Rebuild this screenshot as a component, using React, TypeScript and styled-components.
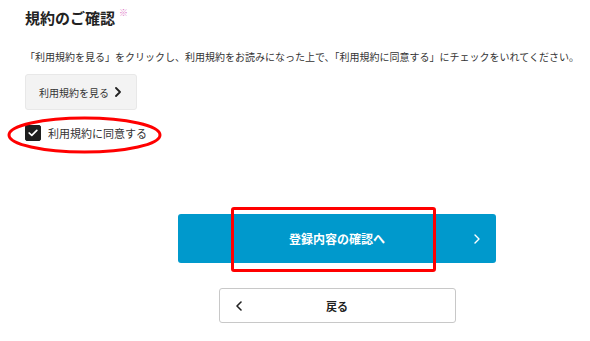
import React, { useState } from 'react'
import styled, { createGlobalStyle } from 'styled-components'

const GlobalStyle = createGlobalStyle`
  html, body {
    margin: 0;
    padding: 0;
    background: #fff;
  }
  body {
    font-family: "Noto Sans CJK JP", "Noto Sans", sans-serif;
    color: #222;
  }
`;

const Page = styled.div`
  width: 590px;
  height: 341px;
  padding: 7px 0 0 25px;
  box-sizing: border-box;
  position: relative;
  overflow: hidden;
`;

const Title = styled.h2`
  margin: 0;
  font-size: 15px;
  font-weight: 700;
  line-height: 22px;
  color: #222;
  display: flex;
  align-items: flex-start;
  gap: 4px;
`;

const Mark = styled.span`
  font-size: 9px;
  color: #e07cc8;
  line-height: 12px;
  font-weight: 400;
`;

const Lead = styled.p`
  margin: 21px 0 0;
  font-size: 10px;
  line-height: 14px;
  color: #333;
  white-space: nowrap;
`;

const TermsButton = styled.button`
  margin-top: 10px;
  width: 112px;
  height: 36px;
  background: #f3f3f3;
  border: 1px solid #e8e8e8;
  border-radius: 3px;
  display: flex;
  align-items: center;
  justify-content: space-between;
  padding: 0 14px 0 13px;
  font-family: inherit;
  font-size: 10px;
  color: #333;
  cursor: pointer;
`;

const CheckRow = styled.label`
  position: relative;
  margin-top: 15px;
  display: flex;
  align-items: center;
  gap: 7px;
  font-size: 11px;
  color: #333;
  cursor: pointer;
  width: max-content;
`;

const Box = styled.span<{ $on: boolean }>`
  width: 16px;
  height: 16px;
  border-radius: 2px;
  background: ${({ $on }) => ($on ? '#1e1e1e' : '#fff')};
  border: 1px solid #1e1e1e;
  box-sizing: border-box;
  display: flex;
  align-items: center;
  justify-content: center;
`;

const Ring = styled.svg`
  position: absolute;
  left: -18px;
  top: -9px;
  pointer-events: none;
`;

const Actions = styled.div`
  margin: 73px 0 0 153px;
  width: 318px;
  display: flex;
  flex-direction: column;
  align-items: center;
  gap: 25px;
`;

const Primary = styled.button`
  position: relative;
  width: 318px;
  height: 49px;
  background: #0099cc;
  border: none;
  border-radius: 3px;
  color: #fff;
  font-family: inherit;
  font-size: 12px;
  font-weight: 700;
  display: flex;
  align-items: center;
  justify-content: center;
  cursor: pointer;
`;

const Highlight = styled.span`
  position: absolute;
  left: 53px;
  top: -7px;
  width: 205px;
  height: 65px;
  border: 3px solid #f00;
  border-radius: 3px;
  box-sizing: border-box;
  pointer-events: none;
`;

const Secondary = styled.button`
  position: relative;
  width: 237px;
  height: 35px;
  background: #fff;
  border: 1px solid #c8c8c8;
  border-radius: 3px;
  color: #222;
  font-family: inherit;
  font-size: 11px;
  font-weight: 700;
  display: flex;
  align-items: center;
  justify-content: center;
  cursor: pointer;
`;

const Chevron = styled.svg<{ $side?: 'left' | 'right' }>`
  position: absolute;
  top: 50%;
  transform: translateY(-50%);
  ${({ $side }) => ($side === 'left' ? 'left: 15px;' : 'right: 15px;')}
`;

const Arrow: React.FC<{ dir: 'left' | 'right'; color: string; w?: number }> = ({ dir, color, w = 1.6 }) => (
  <svg width="8" height="10" viewBox="0 0 8 10">
    <path
      d={dir === 'right' ? 'M2 1 L6 5 L2 9' : 'M6 1 L2 5 L6 9'}
      fill="none"
      stroke={color}
      strokeWidth={w}
      strokeLinecap="round"
      strokeLinejoin="round"
    />
  </svg>
);

export default function App() {
  const [agreed, setAgreed] = useState(true);

  return (
    <>
      <GlobalStyle />
      <Page>
        <Title>
          規約のご確認<Mark>※</Mark>
        </Title>
        <Lead>
          「利用規約を見る」をクリックし、利用規約をお読みになった上で、「利用規約に同意する」にチェックをいれてください。
        </Lead>
        <TermsButton>
          利用規約を見る
          <Arrow dir="right" color="#222" w={1.8} />
        </TermsButton>
        <CheckRow onClick={() => setAgreed(!agreed)}>
          <Box $on={agreed}>
            {agreed && (
              <svg width="10" height="8" viewBox="0 0 10 8">
                <path d="M1.2 4 L3.8 6.4 L8.8 1.4" fill="none" stroke="#fff" strokeWidth="1.7" strokeLinecap="round" strokeLinejoin="round" />
              </svg>
            )}
          </Box>
          利用規約に同意する
          <Ring width="155" height="38" viewBox="0 0 155 38">
            <ellipse cx="77.5" cy="19" rx="75.5" ry="17" fill="none" stroke="#f00" strokeWidth="3" />
          </Ring>
        </CheckRow>
        <Actions>
          <Primary>
            登録内容の確認へ
            <Chevron $side="right" width="8" height="10" viewBox="0 0 8 10">
              <path d="M2 1 L6 5 L2 9" fill="none" stroke="#fff" strokeWidth="1.4" strokeLinecap="round" strokeLinejoin="round" />
            </Chevron>
            <Highlight />
          </Primary>
          <Secondary>
            <Chevron $side="left" width="8" height="10" viewBox="0 0 8 10">
              <path d="M6 1 L2 5 L6 9" fill="none" stroke="#222" strokeWidth="1.6" strokeLinecap="round" strokeLinejoin="round" />
            </Chevron>
            戻る
          </Secondary>
        </Actions>
      </Page>
    </>
  );
}
